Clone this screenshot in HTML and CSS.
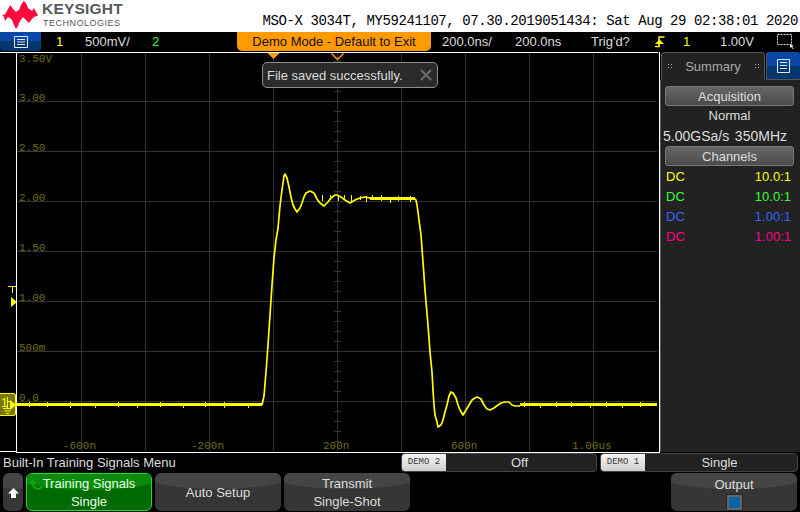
FILE: index.html
```html
<!DOCTYPE html>
<html lang="en">
<head>
<meta charset="utf-8">
<title>MSO-X 3034T</title>
<link rel="stylesheet" href="styles.css">
</head>
<body>
<div class="screen">
  <header class="head">
    <div class="logo">
      <svg class="wave" width="38" height="31" viewBox="0 0 38 31"><path fill="#ff0a3c" d="M1 15 4 14.500 6.500 10 9.300 5 12 9 15 12 18 10 20 5 22.700 1 25 3 27 8 29 9.500 31 11 33 8 35 12 37 15 36 16 33 17 31 19 28 23 25 20 22 17 19 21 17 26 15 29 13 25 11 20 9 18 7 17 4 21 3 17Z"/></svg>
      <div class="brand"><div class="brand-a">KEYSIGHT</div><div class="brand-b">TECHNOLOGIES</div></div>
    </div>
    <div class="ident">MSO-X 3034T, MY59241107, 07.30.2019051434: Sat Aug 29 02:38:01 2020</div>
  </header>

  <div class="status">
    <div class="menu-btn"><svg width="14" height="12" viewBox="0 0 14 12"><path fill="none" stroke="#dfe8f5" d="M.5.5h13v11H.5zM3 3.500h8M3 6h8M3 8.500h8"/></svg></div>
    <span class="st st-1 c-yellow">1</span>
    <span class="st st-2">500mV/</span>
    <span class="st st-3 c-green">2</span>
    <div class="demo">Demo Mode - Default to Exit</div>
    <span class="st st-4">200.0ns/</span>
    <span class="st st-5">200.0ns</span>
    <span class="st st-6">Trig'd?</span>
    <svg class="st st-7" width="10" height="12" viewBox="0 0 10 12"><path fill="none" stroke="#ff0" stroke-width="1.500" d="M0 10.500h4V1h5.500"/><path fill="#ff0" d="M0 8h9L4.500 3.500z"/></svg>
    <span class="st st-8 c-yellow">1</span>
    <span class="st st-9">1.00V</span>
    <svg class="st st-10" width="18" height="15" viewBox="0 0 18 15"><path fill="none" stroke="#ddd" stroke-dasharray="2 1" d="M.5.5h14v10H.5z"/><path fill="#ddd" d="M13 10l4 2-2 .5L17 15l-1 0-2-2-1 1z"/></svg>
  </div>

  <main class="middle">
    <div class="plot-wrap">
      <svg class="plot" width="658" height="400" viewBox="0 52 658 400" shape-rendering="crispEdges">
        <path class="grid" d="M81.500 53V451M145.500 53V451M209.500 53V451M273.500 53V451M401.500 53V451M465.500 53V451M529.500 53V451M593.500 53V451M17 101.500H657M17 151.500H657M17 201.500H657M17 301.500H657M17 351.500H657M17 401.500H657"/>
        <path class="grid" d="M337.500 53V451M17 251.500H657"/>
        <path class="grid" d="M334 61.500h7M334 71.500h7M334 81.500h7M334 91.500h7M334 111.500h7M334 121.500h7M334 131.500h7M334 141.500h7M334 161.500h7M334 171.500h7M334 181.500h7M334 191.500h7M334 211.500h7M334 221.500h7M334 231.500h7M334 241.500h7M334 261.500h7M334 271.500h7M334 281.500h7M334 291.500h7M334 311.500h7M334 321.500h7M334 331.500h7M334 341.500h7M334 361.500h7M334 371.500h7M334 381.500h7M334 391.500h7M334 411.500h7M334 421.500h7M334 431.500h7M334 441.500h7"/>
        <g class="scale">
          <text x="19" y="62">3.50V</text><text x="19" y="101">3.00</text><text x="19" y="151">2.50</text><text x="19" y="201">2.00</text><text x="19" y="251">1.50</text><text x="19" y="301">1.00</text><text x="19" y="351">500m</text><text x="19" y="401">0.0</text>
          <text x="63" y="449">-600n</text><text x="191" y="449">-200n</text><text x="323" y="449">200n</text><text x="451" y="449">600n</text><text x="572" y="449">1.00us</text>
        </g>
        <path class="trace thin" stroke-linejoin="round" shape-rendering="auto" d="M262 405 264 396 266 372 268 345 270 315 272 285 274 258 276 240 278 228 280 206 282 190 284 176 285 174 287 178 289 187 291 197 293 205 295 209 297 212 300 208 302 203 304 197 306 193 310 191 314 193 317 199 320 203 324 206 328 202 331 198 335 195 337 195 341 197 345 200 350 203 355 200 360 198 365 197 370 198 415 199 416 200 417 205 418 212 419 220 421 235 423 262 425 290 428 325 430 352 432 372 433 390 434 405 435 415 437 422 438 427 441 425 443 420 445 412 447 405 449 396 451 392 453 393 456 398 458 405 460 410 463 415 466 410 469 405 472 400 475 398 477 397 481 399 484 405 487 409 490 410 494 408 498 405 501 403 505 402 509 402 512 405 515 406 520 406"/>
        <path class="trace thick" d="M17 404.500H262M370 198.500H415M520 404.500H657"/>
        <path class="trace spikes" d="M29.500 402v5M47.500 402v5M70.500 402v6M95.500 403v5M118.500 402v5M137.500 403v5M160.500 402v5M183.500 403v5M205.500 402v5M224.500 402v6M248.500 403v5M322.500 195v6M330.500 195v5M338.500 195v6M344.500 195v5M351.500 195v6M360.500 196v4M366.500 196v6M372.500 195v5M381.500 195v6M390.500 197v6M398.500 196v5M410.500 196v6M524.500 402v5M540.500 403v5M556.500 402v5M571.500 402v5M590.500 403v5M606.500 402v5M622.500 403v5M640.500 402v5"/>
        <path class="tri" d="M267 53h12l-6 6z"/>
        <path class="tri-out" shape-rendering="auto" d="M331.500 53.500l6 6 6-6"/>
      </svg>
      <div class="toast"><span>File saved successfully.</span><svg width="12" height="12" viewBox="0 0 12 12"><path stroke="#6a6a6a" stroke-width="2.400" d="M1 1l10 10M11 1L1 11"/></svg></div>
      <svg class="trig-mark" width="9" height="22" viewBox="0 0 9 22"><path fill="none" stroke="#ff0" d="M0 .5h8M4.500 0v7"/><path fill="#ff0" d="M3 11l6 5-6 5z"/></svg>
      <div class="gnd">
        <svg width="16" height="22" viewBox="0 0 16 22"><path fill="none" stroke="#ff0" d="M7.500 3v11M3 14.500h9M4.500 17h6M6 19.500h3M7.500 7.500h3"/><path fill="#ff0" d="M10 6l6 5-6 5z"/></svg>
        <span class="gnd-n">1</span>
      </div>
    </div>
    <aside class="panel">
      <div class="tabs">
        <div class="tab-sum"><i class="grip"></i>Summary<i class="grip"></i></div>
        <div class="tab-blue"><svg width="13" height="14" viewBox="0 0 13 14"><path fill="none" stroke="#dfe8f5" d="M.5.500h12v13H.5zM3 3.500h7M3 6.500h7M3 9.500h7"/></svg></div>
      </div>
      <div class="panel-body">
        <div class="heading">Acquisition</div>
        <div class="line center">Normal</div>
        <div class="line spread"><span>5.00GSa/s</span><span>350MHz</span></div>
        <div class="heading">Channels</div>
        <div class="line row c-yellow"><span>DC</span><span>10.0:1</span></div>
        <div class="line row c-green"><span>DC</span><span>10.0:1</span></div>
        <div class="line row c-blue"><span>DC</span><span>1.00:1</span></div>
        <div class="line row c-pink"><span>DC</span><span>1.00:1</span></div>
      </div>
    </aside>
  </main>

  <footer class="foot">
    <div class="labels">
      <div class="menu-name">Built-In Training Signals Menu</div>
      <div class="field f2"><span class="tagbox">DEMO 2</span><span class="val">Off</span></div>
      <div class="field f1"><span class="tagbox">DEMO 1</span><span class="val">Single</span></div>
    </div>
    <div class="keys">
      <div class="key up"><svg width="11" height="12" viewBox="0 0 11 12"><path fill="#fff" d="M5.500 1 11 6.500H8V11H3V6.500H0z"/></svg></div>
      <div class="key on"><svg class="swirl" width="16" height="14" viewBox="0 0 20 18"><path fill="none" stroke="#0fa80f" stroke-width="2.500" d="M17 13C12 17 5 15 4 8"/><path fill="#0fa80f" d="M0 9l4-7 5 6z"/></svg><span>Training Signals</span><span>Single</span></div>
      <div class="key"><span>Auto Setup</span></div>
      <div class="key"><span>Transmit</span><span>Single-Shot</span></div>
      <div class="spacer"></div>
      <div class="key"><span>Output</span><i class="outbox"></i></div>
    </div>
  </footer>
</div>
</body>
</html>
```
FILE: styles.css
```css
* { box-sizing: border-box; }
html, body { margin: 0; padding: 0; background: #000; }
body { font-family: "Liberation Sans", Arial, sans-serif; color: #e0e0e0; }
.screen { width: 800px; height: 512px; display: flex; flex-direction: column; overflow: hidden; background: #000; }

.head { height: 32px; background: #fff; display: flex; justify-content: space-between; flex: none; }
.logo { display: flex; gap: 3px; }
.wave { display: block; margin-left: 1px; }
.brand { padding: 1px 0 0 0; }
.brand-a { font-size: 15.500px; line-height: 15px; font-weight: 700; color: #555a5c; letter-spacing: .2px; }
.brand-b { font-size: 9px; line-height: 12px; margin-top: 1px; color: #555a5c; letter-spacing: .5px; margin-left: 1px; }
.ident { font-family: "Liberation Mono", monospace; font-size: 14px; letter-spacing: -.41px; color: #000; padding: 13px 2px 0 0; line-height: 17px; white-space: nowrap; }

.status { height: 21px; position: relative; flex: none; font-size: 13px; }
.status::after { content: ""; position: absolute; left: 0; bottom: 0; width: 658px; height: 1px; background: #fff; }
.menu-btn { position: absolute; left: 0; top: 0; width: 41px; height: 19px; background: linear-gradient(#0a48a8 0 50%, #03366c 50%); border-radius: 0 0 3px 3px; display: flex; align-items: center; justify-content: center; }
.st { position: absolute; top: 1px; line-height: 18px; color: #ddd; }
.st-1 { left: 56px; } .st-2 { left: 85px; } .st-3 { left: 152px; }
.st-4 { left: 442px; } .st-5 { left: 515px; } .st-6 { left: 591px; }
.st-7 { left: 655px; top: 4px; } .st-8 { left: 683px; } .st-9 { left: 720px; }
.st-10 { left: 777px; top: 2px; }
.c-yellow { color: #ff0; } .c-green { color: #3f3; } .c-blue { color: #36f; } .c-pink { color: #f08; }
.demo { position: absolute; left: 237px; top: 0; width: 194px; height: 19px; background: #ff9a00; color: #111; border-radius: 0 0 5px 5px; text-align: center; line-height: 19px; }

.middle { height: 399px; display: flex; flex: none; }
.plot-wrap { width: 660px; position: relative; flex: none; }
.plot { position: absolute; left: 0; top: -1px; }
.plot-wrap::after { content: ""; position: absolute; left: 16px; top: -1px; width: 642px; height: 400px; border: solid #fff; border-width: 0 1px 1px 1px; pointer-events: none; }
.plot-wrap::before { content: ""; position: absolute; left: 0; top: 398px; width: 16px; height: 1px; background: #fff; }
.grid { stroke: #333; stroke-width: 1; fill: none; }
.scale { font-family: "Liberation Mono", monospace; font-size: 11px; fill: #6e6e14; }
.trace { fill: none; stroke: #ff0; }
.trace.thin { stroke-width: 1.700; }
.trace.thick { stroke-width: 3; }
.trace.spikes { stroke-width: 1; }
.tri { fill: #ff9a00; }
.tri-out { fill: none; stroke: #ff9a00; stroke-width: 1.500; }
.toast { position: absolute; left: 262px; top: 9px; width: 176px; height: 26px; background: #2a2a2a; border: 1px solid #8c8c8c; border-radius: 5px; display: flex; align-items: center; justify-content: space-between; padding: 0 5px 0 4px; font-size: 13px; color: #ddd; }
.trig-mark { position: absolute; left: 8px; top: 233px; }
.gnd { position: absolute; left: 0; top: 340px; width: 16px; height: 23px; background: #77770a; border: 1px solid #ff0; border-left: 0; border-radius: 0 3px 3px 0; }
.gnd svg { position: absolute; left: 0; top: 0; }
.gnd-n { position: absolute; left: 1px; top: 2px; font-size: 12px; line-height: 14px; color: #ff0; }

.panel { width: 140px; height: 400px; margin-top: -1px; flex: none; display: flex; flex-direction: column; font-size: 13px; }
.tabs { height: 28px; display: flex; gap: 1px; flex: none; }
.tab-sum { width: 104px; margin-left: 1px; background: #222; border: 1px solid #555; border-bottom: 0; border-radius: 4px 4px 0 0; display: flex; align-items: center; justify-content: space-between; padding: 0 5px; color: #aaa; }
.grip { width: 5px; height: 7px; background: radial-gradient(circle, #aaa 0 1px, transparent 1px) 0 0 / 3px 3px; }
.tab-blue { width: 34px; background: linear-gradient(#0a48a8 0 50%, #03366c 50%); display: flex; align-items: center; justify-content: center; border-radius: 3px 3px 0 0; border-left: 1px solid #555; border-bottom: 1px solid #555; }
.panel-body { flex: 1; background: #222; border-left: 1px solid #555; padding: 6px 6px 0 4px; display: flex; flex-direction: column; }
.heading { height: 20px; background: linear-gradient(#666, #4c4c4c); border: 1px solid #777; border-radius: 3px; text-align: center; line-height: 20px; color: #ddd; flex: none; }
.line { height: 20px; line-height: 20px; flex: none; color: #ddd; }
.center { text-align: center; }
.spread { display: flex; justify-content: space-between; padding-right: 7px; margin-left: -2px; font-size: 14px; }
.row { display: flex; justify-content: space-between; padding: 0 3px 0 1px; line-height: 22px; }
.c-yellow.row { color: #ff0; } .c-green.row { color: #3f3; } .c-blue.row { color: #36f; } .c-pink.row { color: #f08; }

.foot { flex: 1; display: flex; flex-direction: column; font-size: 13px; }
.labels { height: 20px; position: relative; flex: none; }
.menu-name { position: absolute; left: 3px; top: 1px; line-height: 20px; color: #ddd; }
.field { position: absolute; top: 1px; height: 19px; display: flex; background: #222; border: 1px solid #444; border-radius: 4px; overflow: hidden; }
.f2 { left: 401px; width: 196px; }
.f1 { left: 600px; width: 198px; }
.tagbox { width: 44px; flex: none; background: linear-gradient(#f4f4f4, #cfcfcf); color: #333; font-family: "Liberation Mono", monospace; font-size: 9px; text-align: center; line-height: 17px; }
.val { flex: 1; text-align: center; line-height: 17px; color: #ddd; padding-right: 3px; }
.keys { height: 39px; display: flex; gap: 3px; padding: 1px 3px 0 3px; flex: none; }
.key { width: 126px; height: 38px; background: #363636; border-radius: 6px; position: relative; overflow: hidden; display: flex; flex-direction: column; align-items: center; justify-content: center; line-height: 18px; color: #ddd; padding-top: 1px; }
.key::before { content: ""; position: absolute; left: -20px; right: -20px; top: -20px; height: 36px; background: #454545; border-radius: 50%; }
.key > * { position: relative; }
.key.up { width: 20px; }
.key.on { background: #006a00; border: 1px solid #22dd22; color: #e8ffe8; }
.key.on::before { background: #0a8a0a; }
.key > .swirl { position: absolute; left: 2px; top: 3px; }
.spacer { flex: 1; }
.outbox { display: block; width: 15px; height: 15px; background: #0a64a4; border: 2px solid #666; outline: 1px solid #222; margin-top: 1px; }
```
